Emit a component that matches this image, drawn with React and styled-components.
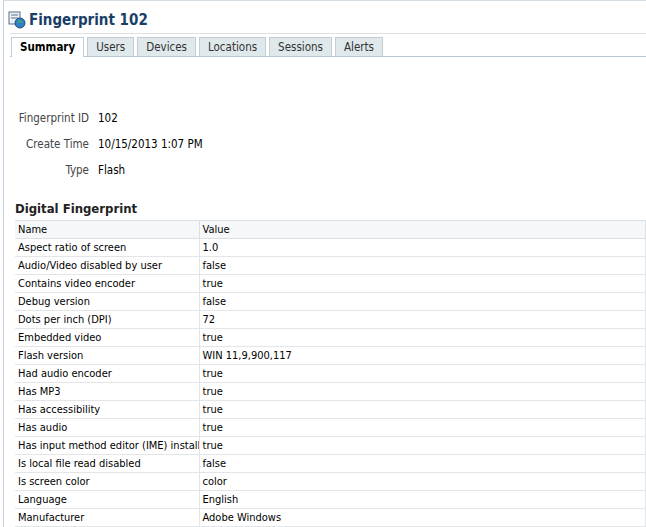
import React from "react";
import styled, { createGlobalStyle } from "styled-components";

const Global = createGlobalStyle`
  body { margin: 0; background: #fff; font-family: Tahoma, "DejaVu Sans Condensed", "Liberation Sans", sans-serif; font-size: 11px; color: #000; }
`;

const Page = styled.div`
  height: 527px;
  overflow: hidden;
  border-left: 1px solid #c5d4e2;
  margin-left: 3px;
  border-top: 1px solid #d5dde5;
`;

const Header = styled.div`
  display: flex;
  align-items: center;
  gap: 3px;
  padding: 8px 0 0 4px;
  height: 22px;
`;

const Title = styled.h1`
  margin: 0;
  font-size: 15px;
  font-weight: bold;
  color: #1b3f66;
  font-family: "DejaVu Sans Condensed", "DejaVu Sans", sans-serif;
`;

const Tabs = styled.div`
  display: flex;
  gap: 3px;
  margin: 2px 0 0 6px;
  padding-left: 1px;
  border-top: 1px solid #e0e0e0;
  padding-top: 3px;
  border-bottom: 1px solid #b9c6cf;
`;

const Tab = styled.div`
  padding: 2px 8px 3px;
  height: 13px;
  font-size: 11.5px;
  border: 1px solid #c2cdd4;
  border-bottom: none;
  background: ${(p) => (p.active ? "#fff" : "#dfe8eb")};
  color: ${(p) => (p.active ? "#000" : "#333")};
  font-weight: ${(p) => (p.active ? "bold" : "normal")};
  margin-bottom: ${(p) => (p.active ? "-1px" : "0")};
  padding-bottom: ${(p) => (p.active ? "4px" : "3px")};
`;

const Fields = styled.div`
  display: grid;
  grid-template-columns: 85px auto;
  column-gap: 9px;
  row-gap: 12px;
  margin-top: 54px;
  font-size: 11.5px;
`;

const Label = styled.div`
  text-align: right;
  color: #444;
`;

const Section = styled.h2`
  margin: 24px 0 4px 11px;
  font-size: 13px;
  font-weight: bold;
  color: #222;
  font-family: "DejaVu Sans Condensed", "DejaVu Sans", sans-serif;
`;

const Table = styled.table`
  margin-left: 11px;
  width: calc(100% - 11px);
  border-collapse: collapse;
  table-layout: fixed;
  font-size: 11px;
`;

const Th = styled.th`
  text-align: left;
  font-weight: normal;
  background: #f5f7f9;
  border: 1px solid #d9dfe4;
  border-left: none;
  height: 17px;
  padding: 0 3px;
`;

const Td = styled.td`
  border-bottom: 1px solid #e3e6e9;
  border-right: 1px solid #e3e6e9;
  height: 17px;
  padding: 0 3px;
  white-space: nowrap;
  overflow: hidden;
  text-overflow: clip;
`;

const rows = [
  ["Aspect ratio of screen", "1.0"],
  ["Audio/Video disabled by user", "false"],
  ["Contains video encoder", "true"],
  ["Debug version", "false"],
  ["Dots per inch (DPI)", "72"],
  ["Embedded video", "true"],
  ["Flash version", "WIN 11,9,900,117"],
  ["Had audio encoder", "true"],
  ["Has MP3", "true"],
  ["Has accessibility", "true"],
  ["Has audio", "true"],
  ["Has input method editor (IME) installed", "true"],
  ["Is local file read disabled", "false"],
  ["Is screen color", "color"],
  ["Language", "English"],
  ["Manufacturer", "Adobe Windows"],
];

const Icon = () => (
  <svg width="18" height="18" viewBox="0 0 18 18">
    <rect x="1" y="1" width="11" height="12" fill="#eef2f7" stroke="#5b6f86" />
    <line x1="3" y1="4" x2="10" y2="4" stroke="#5b6f86" />
    <line x1="3" y1="7" x2="10" y2="7" stroke="#5b6f86" />
    <circle cx="12" cy="12" r="5" fill="#2f7fc8" stroke="#1d4f80" />
    <path d="M9 11 q2-3 4-1 t3 2" fill="#4caf50" />
  </svg>
);

const tabs = ["Summary", "Users", "Devices", "Locations", "Sessions", "Alerts"];

export default function App() {
  return (
    <Page>
      <Global />
      <Header>
        <Icon />
        <Title>Fingerprint 102</Title>
      </Header>
      <Tabs>
        {tabs.map((t, i) => (
          <Tab key={t} active={i === 0}>{t}</Tab>
        ))}
      </Tabs>
      <Fields>
        <Label>Fingerprint ID</Label><div>102</div>
        <Label>Create Time</Label><div>10/15/2013 1:07 PM</div>
        <Label>Type</Label><div>Flash</div>
      </Fields>
      <Section>Digital Fingerprint</Section>
      <Table>
        <colgroup><col style={{ width: 184 }} /><col /></colgroup>
        <thead><tr><Th>Name</Th><Th>Value</Th></tr></thead>
        <tbody>
          {rows.map(([n, v]) => (
            <tr key={n}><Td>{n}</Td><Td>{v}</Td></tr>
          ))}
        </tbody>
      </Table>
    </Page>
  );
}
